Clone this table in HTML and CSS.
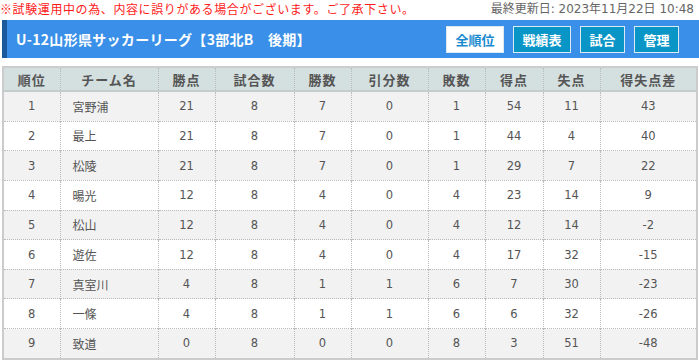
FILE: index.html
```html
<!DOCTYPE html>
<html lang="ja">
<head>
<meta charset="utf-8">
<title>U-12山形県サッカーリーグ</title>
<link rel="stylesheet" href="styles.css">
</head>
<body>
<div class="topline">
  <span class="notice">※試験運用中の為、内容に誤りがある場合がございます。ご了承下さい。</span>
  <span class="updated">最終更新日: 2023年11月22日 10:48</span>
</div>
<div class="titlebar">
  <h1 class="title">U-12山形県サッカーリーグ【3部北B　後期】</h1>
  <nav class="btns">
    <a class="btn active">全順位</a>
    <a class="btn">戦績表</a>
    <a class="btn">試合</a>
    <a class="btn">管理</a>
  </nav>
</div>
<table class="standings">
  <colgroup>
    <col class="c57"><col class="c98"><col class="c57"><col class="c79"><col class="c57"><col class="c77"><col class="c57"><col class="c58"><col class="c57"><col>
  </colgroup>
  <thead>
    <tr><th>順位</th><th>チーム名</th><th>勝点</th><th>試合数</th><th>勝数</th><th>引分数</th><th>敗数</th><th>得点</th><th>失点</th><th>得失点差</th></tr>
  </thead>
  <tbody>
    <tr><td>1</td><td class="team">宮野浦</td><td>21</td><td>8</td><td>7</td><td>0</td><td>1</td><td>54</td><td>11</td><td>43</td></tr>
    <tr><td>2</td><td class="team">最上</td><td>21</td><td>8</td><td>7</td><td>0</td><td>1</td><td>44</td><td>4</td><td>40</td></tr>
    <tr><td>3</td><td class="team">松陵</td><td>21</td><td>8</td><td>7</td><td>0</td><td>1</td><td>29</td><td>7</td><td>22</td></tr>
    <tr><td>4</td><td class="team">暘光</td><td>12</td><td>8</td><td>4</td><td>0</td><td>4</td><td>23</td><td>14</td><td>9</td></tr>
    <tr><td>5</td><td class="team">松山</td><td>12</td><td>8</td><td>4</td><td>0</td><td>4</td><td>12</td><td>14</td><td>-2</td></tr>
    <tr><td>6</td><td class="team">遊佐</td><td>12</td><td>8</td><td>4</td><td>0</td><td>4</td><td>17</td><td>32</td><td>-15</td></tr>
    <tr><td>7</td><td class="team">真室川</td><td>4</td><td>8</td><td>1</td><td>1</td><td>6</td><td>7</td><td>30</td><td>-23</td></tr>
    <tr><td>8</td><td class="team">一條</td><td>4</td><td>8</td><td>1</td><td>1</td><td>6</td><td>6</td><td>32</td><td>-26</td></tr>
    <tr><td>9</td><td class="team">致道</td><td>0</td><td>8</td><td>0</td><td>0</td><td>8</td><td>3</td><td>51</td><td>-48</td></tr>
  </tbody>
</table>
</body>
</html>
```
FILE: styles.css
```css
html, body {
  margin: 0;
  padding: 0;
  background: #ffffff;
  font-family: "Noto Sans CJK JP", "Noto Sans", sans-serif;
}
.topline {
  display: flex;
  justify-content: space-between;
  align-items: center;
  padding: 2px 5px 0 0;
  line-height: 14px;
}
.notice {
  color: #ff1a1a;
  font-size: 12px;
  letter-spacing: 0.6px;
  line-height: 14px;
  white-space: nowrap;
}
.updated {
  color: #666666;
  font-family: "DejaVu Sans", "Noto Sans CJK JP", sans-serif;
  font-size: 12px;
  white-space: nowrap;
}
.titlebar {
  display: flex;
  align-items: center;
  justify-content: space-between;
  margin: 4px 0 0 2px;
  height: 38px;
  background: #3a90e8;
  border-left: 5px solid #1a5a9a;
  padding: 0 20px 0 9px;
}
.title {
  margin: 0;
  color: #ffffff;
  font-size: 14px;
  font-weight: bold;
  letter-spacing: 0.3px;
}
.btns {
  display: flex;
  gap: 9px;
}
.btn {
  display: block;
  height: 25px;
  line-height: 25px;
  padding: 0 8.5px;
  border: 1px solid #dce9f2;
  background: #0a95c7;
  color: #ffffff;
  font-size: 13px;
  font-weight: bold;
}
.btn.active {
  background: #ffffff;
  color: #1a8ad0;
}
.c57 { width: 57px; }
.c58 { width: 58px; }
.c77 { width: 77px; }
.c79 { width: 79px; }
.c98 { width: 98px; }
.standings {
  margin: 8px 0 0 2px;
  width: 696px;
  border-collapse: collapse;
  border: 2px solid #cccccc;
  table-layout: fixed;
  color: #555555;
}
.standings th {
  height: 22px;
  padding: 0;
  background: #d4e0e0;
  font-weight: bold;
  font-size: 13px;
  color: #555555;
  border-bottom: 2px solid #c4cccc;
  border-left: 1px dotted #bbbbbb;
  letter-spacing: 1px;
}
.standings td {
  height: 28.65px;
  padding: 0;
  text-align: center;
  border-top: 1px dotted #bbbbbb;
  border-left: 1px dotted #bbbbbb;
  font-family: "DejaVu Sans", "Noto Sans CJK JP", sans-serif;
  font-size: 11.5px;
}
.standings td.team {
  text-align: left;
  padding-left: 12px;
  font-family: "Noto Sans CJK JP", sans-serif;
  font-size: 12px;
}
.standings tbody tr:nth-child(odd) {
  background: #f2f2f2;
}
```
